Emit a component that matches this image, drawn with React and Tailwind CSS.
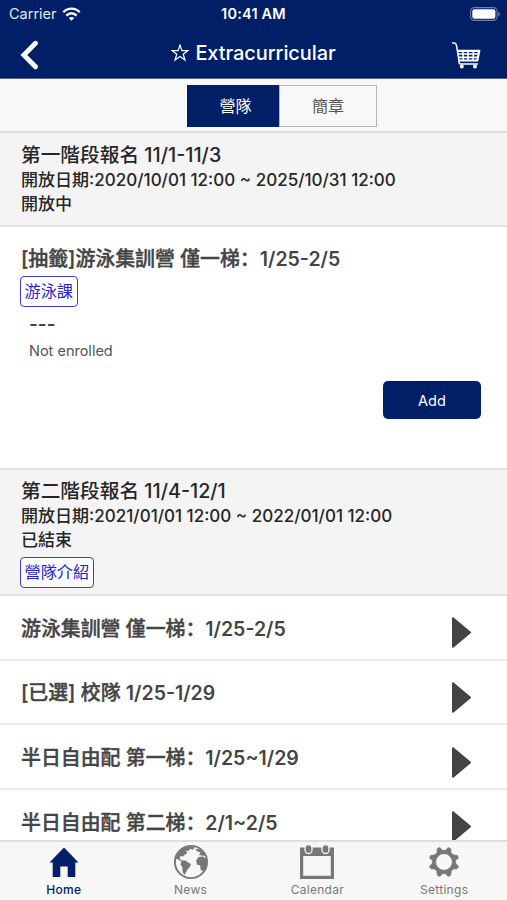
import React from 'react';

const sections = [
  {
    title: '第一階段報名 11/1-11/3',
    period: '開放日期:2020/10/01 12:00 ~ 2025/10/31 12:00',
    status: '開放中',
  },
  {
    title: '第二階段報名 11/4-12/1',
    period: '開放日期:2021/01/01 12:00 ~ 2022/01/01 12:00',
    status: '已結束',
    tag: '營隊介紹',
  },
];

const camps = [
  { name: '游泳集訓營 僅一梯：', dates: '1/25-2/5' },
  { name: '[已選] 校隊 ', dates: '1/25-1/29' },
  { name: '半日自由配 第一梯：', dates: '1/25~1/29' },
  { name: '半日自由配 第二梯：', dates: '2/1~2/5' },
];

const WifiIcon = () => (
  <svg className="w-[19px] h-[14px]" viewBox="0 0 18 14" fill="none" stroke="white" strokeWidth="2.4">
    <path d="M0.8 5.200C5.300.4 12.700.4 17.200 5.200" />
    <path d="M3.900 8.600C7 5.500 11 5.500 14.100 8.600" />
    <path d="M9 13.800L6.300 11C7.800 9.600 10.200 9.600 11.700 11Z" fill="white" stroke="none" />
  </svg>
);

const BatteryIcon = () => (
  <svg className="w-[31px] h-[14px]" viewBox="0 0 31 14">
    <rect x="0.6" y="0.6" width="26.500" height="12.800" rx="3.800" fill="none" stroke="#6f7eab" strokeWidth="1.1" />
    <rect x="2.300" y="2.200" width="23.100" height="9.600" rx="2.200" fill="white" />
    <path d="M28.300 4.700C30.500 5.500 30.500 8.500 28.300 9.300Z" fill="#6f7eab" />
  </svg>
);

const CartIcon = () => (
  <svg className="w-[29px] h-[28px]" viewBox="0 0 29 28" fill="none" stroke="white">
    <path d="M0.500 2H2.500Q4 2.200 4.500 4.500L7 20Q6.500 23 9 23H25.500" strokeWidth="1.500" strokeLinecap="round" />
    <path d="M5.300 9.800H27.300L25.300 19.500H7" strokeWidth="2.200" strokeLinejoin="round" />
    <path d="M6 13H26.500M6.500 16.400H26M10.800 9.500L11.300 19.500M16 9.500V19.500M21.500 9.500L21 19.500" strokeWidth="1.600" />
    <circle cx="9.800" cy="25.500" r="2" fill="white" stroke="none" />
    <circle cx="23" cy="25.500" r="2" fill="white" stroke="none" />
  </svg>
);

const StarIcon = () => (
  <svg className="w-[18px] h-[18px]" viewBox="0 0 18 18" fill="none" stroke="white" strokeWidth="1.200">
    <path d="M9 1L10.900 6.600H17L12.200 10.200L14 16L9 12.500L4 16L5.800 10.200L1 6.600H7.100Z" />
  </svg>
);

const HomeIcon = () => (
  <svg className="w-[36px] h-[36px]" viewBox="0 0 36 36" fill="currentColor">
    <path d="M18 3.500L32.500 18.500H29.300V33H21.700V22.500H14.300V33H6.700V18.500H3.500Z" />
  </svg>
);

const GlobeIcon = () => (
  <svg className="w-[36px] h-[36px]" viewBox="0 0 36 36" fill="currentColor">
    <circle cx="18" cy="18" r="16.100" fill="none" stroke="currentColor" strokeWidth="1.900" />
    <path d="M2.500 15L5 9L9 5L13 3L18 2.500L22 3.500L20 5.500L17 5L15.500 7L12.500 6.500L14.500 9L12 10.500L10 12.500L7.500 12L6.500 14.500L9 16.500L7.500 17L4.500 15Z" />
    <path d="M8.500 16.500L12.500 16.500L15 18.500L18 20L16.800 23L14.500 25.500L12.500 29L11.500 31L9.500 28L9.500 23.500L7.500 20.500Z" />
    <path d="M25.500 13L30 12.500L33.500 15V21L31.500 26L29.500 27L27.500 25.500L27.300 21.500L23.800 20.500L23.200 16.500Z" />
    <path d="M22 5L26 5L30 8L32.500 12L28.500 11.500L26 11L27.500 8.500L24.500 7.500Z" />
  </svg>
);

const CalendarIcon = () => (
  <svg className="w-[36px] h-[36px]" viewBox="0 0 36 36">
    <path d="M1 3.500H35V35H1ZM4.200 12V31.800H31.800V12Z" fill="currentColor" fillRule="evenodd" />
    <rect x="6" y="0.5" width="7" height="9" rx="3.500" fill="currentColor" stroke="#f7f7f7" strokeWidth="1.300" />
    <rect x="23" y="0.5" width="7" height="9" rx="3.500" fill="currentColor" stroke="#f7f7f7" strokeWidth="1.300" />
  </svg>
);

const GearIcon = () => (
  <svg className="w-[36px] h-[36px]" viewBox="-18 -18 36 36" fill="currentColor">
    <path
      fillRule="evenodd"
      d="M-6 -14L-4 -14.500L-1.700 -11.700H1.700L4 -14.500L6.800 -13.300L7 -9.500L9.500 -7L13.300 -6.800L14.500 -4L11.700 -1.700V1.700L14.500 4L13.300 6.800L9.500 7L7 9.500L6.800 13.300L4 14.500L1.700 11.700H-1.700L-4 14.500L-6.800 13.300L-7 9.500L-9.500 7L-13.300 6.800L-14.500 4L-11.700 1.700V-1.700L-14.500 -4L-13.300 -6.800L-9.500 -7L-7 -9.500L-6.800 -13.300ZM0 -8.300A8.300 8.300 0 1 0 0 8.300A8.300 8.300 0 1 0 0 -8.300Z"
      stroke="currentColor"
      strokeWidth="0.600"
      strokeLinejoin="round"
    />
  </svg>
);

const tabs = [
  { label: 'Home', icon: HomeIcon, active: true },
  { label: 'News', icon: GlobeIcon },
  { label: 'Calendar', icon: CalendarIcon },
  { label: 'Settings', icon: GearIcon },
];

const Tag = ({ children }) => (
  <span className="inline-flex items-center h-[31px] px-[3.5px] pb-px border-[1.5px] border-[#3f3bdf] rounded-[4px] text-[16.2px] font-normal text-[#2722d8] bg-white/60">
    {children}
  </span>
);

const CampTitle = ({ name, dates }) => (
  <h3 className="text-[19.9px] leading-[25px] font-medium text-[#444] whitespace-pre">
    <span className="[-webkit-text-stroke:0.4px_#444]">{name}</span>
    <span className="text-[19.5px] font-semibold">{dates}</span>
  </h3>
);

const SectionHeader = ({ section, className }) => (
  <div className={`bg-[#f4f4f4] border-[#e2e2e2] px-[21px] text-[#262626] font-medium ${className}`}>
    <h2 className="text-[19.7px] leading-[25px] font-medium">{section.title}</h2>
    <p className="text-[17.05px] leading-6 whitespace-nowrap">{section.period}</p>
    <p className="text-[17px] leading-6">{section.status}</p>
    {section.tag && (
      <div className="flex -ml-px mt-[5px]">
        <Tag>{section.tag}</Tag>
      </div>
    )}
  </div>
);

const App = () => {
  return (
    <div className="w-[507px] h-[900px] flex flex-col overflow-hidden bg-white font-['Inter','Noto_Sans_CJK_SC',sans-serif]">
      {/* Status bar + title */}
      <header className="h-[79px] shrink-0 bg-[#001f67] text-white border-b border-[#53658f]">
        <div className="h-[27px] grid grid-cols-3 items-center pl-[9px] pr-[6px]">
          <div className="flex items-center gap-[5px] text-[14.5px] text-white/90">
            <span>Carrier</span>
            <WifiIcon />
          </div>
          <div className="text-center text-[14.5px] tracking-[0.2px] font-semibold -ml-[3px]">10:41 AM</div>
          <div className="flex justify-end">
            <BatteryIcon />
          </div>
        </div>
        <div className="h-[51px] grid grid-cols-[80px_1fr_80px] items-center">
          <button className="pl-5 pt-1">
            <svg className="w-[19px] h-[30px]" viewBox="0 0 19 30" fill="none" stroke="white" strokeWidth="4.800" strokeLinecap="round">
              <path d="M15.500 3.200L3.800 15L15.500 26.800" />
            </svg>
          </button>
          <h1 className="flex items-center justify-center gap-[6px] text-[20px] tracking-[-0.1px] font-medium">
            <StarIcon />
            <span>Extracurricular</span>
          </h1>
          <button className="flex justify-end pr-[26px] pt-1">
            <CartIcon />
          </button>
        </div>
      </header>

      {/* Segmented control */}
      <div className="h-[54px] shrink-0 flex justify-center items-center bg-[#f8f8f8] border-b-2 border-[#dedede] pl-[57px] pt-px">
        <div className="flex w-[190px] h-[42px] text-[16px]">
          <button className="w-[92px] pl-[5px] bg-[#001f67] text-white">營隊</button>
          <button className="flex-1 border border-[#b5b5b5] text-[#555]">簡章</button>
        </div>
      </div>

      <main className="flex-1 min-h-0 overflow-hidden">
        <SectionHeader section={sections[0]} className="h-[94px] pt-[10px] border-b-2" />

        <div className="h-[241px] px-5 pt-[20px] flex flex-col items-start text-[#444]">
          <div className="ml-px">
            <CampTitle name="[抽籤]游泳集訓營 僅一梯：" dates="1/25-2/5" />
          </div>
          <div className="flex mt-1">
            <Tag>游泳課</Tag>
          </div>
          <div className="ml-[9px] mt-[5px] text-[19px] leading-[26px] font-semibold">---</div>
          <div className="ml-[9px] mt-[3px] text-[14.5px] leading-5 text-[#555]">Not enrolled</div>
          <button className="self-end mr-[6px] mt-[20px] w-[98px] h-[38px] rounded-[5px] bg-[#001f67] text-white text-[14.5px] pt-px">
            Add
          </button>
        </div>

        <SectionHeader section={sections[1]} className="h-[128px] pt-[9px] border-t-2 border-b-2" />

        {camps.map((camp) => (
          <div
            key={camp.name}
            className="h-[64.67px] flex items-center justify-between pl-[21px] pr-9 border-b-2 border-[#eaeaea]"
          >
            <div className="pt-1">
              <CampTitle name={camp.name} dates={camp.dates} />
            </div>
            <svg className="w-[19px] h-[31px] mt-[11px]" viewBox="0 0 19 31" fill="#444" stroke="#444" strokeWidth="2" strokeLinejoin="round">
              <path d="M1 1.200V29.800L18 15.500Z" />
            </svg>
          </div>
        ))}
      </main>

      {/* Bottom tabs */}
      <nav className="h-[60px] shrink-0 grid grid-cols-4 bg-[#f7f7f7] border-t-2 border-[#dedede]">
        {tabs.map((tab) => {
          const Icon = tab.icon;
          return (
            <div
              key={tab.label}
              className={`flex flex-col items-center pt-[2px] pl-px text-[12px] tracking-[0.3px] ${
                tab.active ? 'text-[#001f67] font-medium' : 'text-[#777]'
              }`}
            >
              <Icon />
              <span className="leading-[16px] mt-[2px]">{tab.label}</span>
            </div>
          );
        })}
      </nav>
    </div>
  );
};

export default App;
